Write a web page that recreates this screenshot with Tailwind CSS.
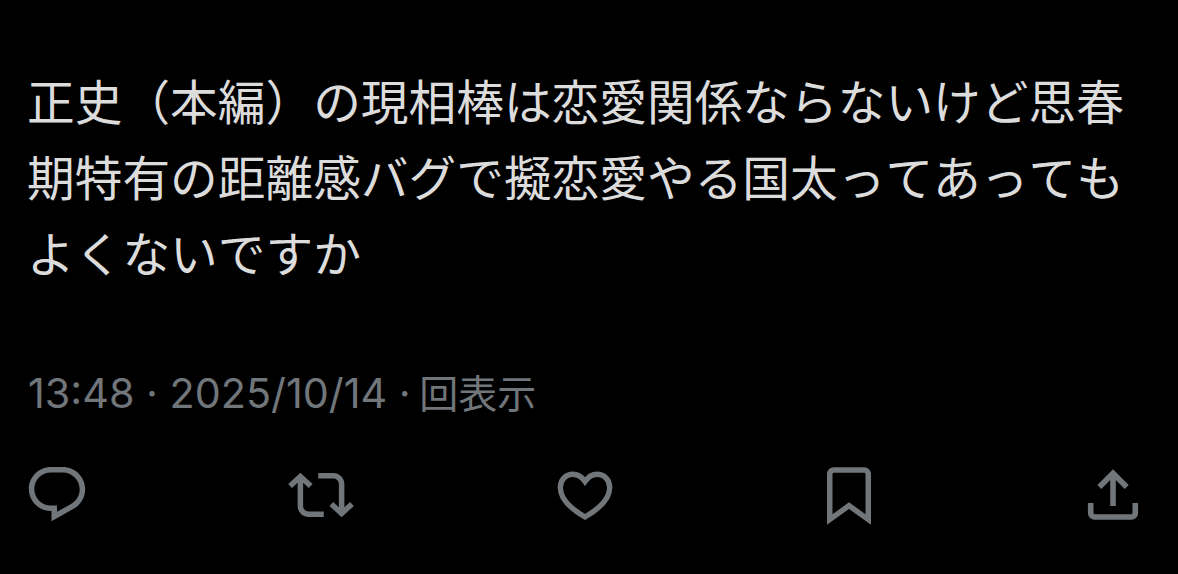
<!DOCTYPE html>
<html lang="ja">
<head>
  <meta charset="UTF-8" />
  <meta name="viewport" content="width=device-width, initial-scale=1.0" />
  <title>Post</title>
  <script src="https://cdn.jsdelivr.net/npm/@tailwindcss/browser@4"></script>
</head>
<body class="bg-black h-screen overflow-hidden">

  <article class="flex flex-col pt-[62px]">
    <p class="pl-[27px] font-['Noto_Sans_CJK_JP',sans-serif] [font-kerning:none] text-[47.7px] leading-[76px] text-[#dcdcdc] whitespace-nowrap">
      正史（本編）の現相棒は恋愛関係ならないけど思春<br />
      期特有の距離感バグで擬恋愛やる国太ってあっても<br />
      よくないですか
    </p>

    <div class="mt-[79px] pl-7 h-12 font-['Inter','Noto_Sans_CJK_JP',sans-serif] text-[41.3px] leading-[48px] text-[#71767b] whitespace-nowrap">13:48 · 2025/10/14 · <span class="-ml-[3px] text-[39px]">回表示</span></div>

    <!-- Actions -->
    <div class="mt-[45px] pl-6 pr-8 flex items-center justify-between text-[#71767b]">
      <button aria-label="返信">
        <svg class="size-[66px]" viewBox="0 0.2 24 24" fill="currentColor">
          <path d="M1.751 10c0-4.42 3.584-8 8.005-8h4.366c4.49 0 8.129 3.64 8.129 8.13 0 2.96-1.607 5.68-4.196 7.11l-8.054 4.46v-3.69h-.067c-4.49.1-8.183-3.51-8.183-8.01zm8.005-6c-3.317 0-6.005 2.69-6.005 6 0 3.37 2.77 6.08 6.138 6.01l.351-.01h1.761v2.3l5.087-2.81c1.951-1.08 3.163-3.13 3.163-5.36 0-3.39-2.744-6.13-6.129-6.13H9.756z" />
        </svg>
      </button>
      <button aria-label="リポスト">
        <svg class="size-[66px]" viewBox="0 0 24 24" fill="currentColor">
          <path d="M4.5 3.88l4.432 4.14-1.364 1.46L5.5 7.55V16c0 1.1.896 2 2 2H13v2H7.5c-2.209 0-4-1.79-4-4V7.55L1.432 9.48.068 8.02 4.5 3.88zM16.5 6H11V4h5.5c2.209 0 4 1.79 4 4v8.45l2.068-1.93 1.364 1.46-4.432 4.14-4.432-4.14 1.364-1.46 2.068 1.93V8c0-1.1-.896-2-2-2z" />
        </svg>
      </button>
      <button aria-label="いいね">
        <svg class="size-[66px]" viewBox="0 0 66 66" fill="none" stroke="currentColor" stroke-width="5.4">
          <path d="M33 19.5C29.5 14.5 25.5 12.3 21 12.3C13.5 12.3 8.3 18 8.3 25.5C8.3 36 17.5 46 33 55C48.5 46 57.7 36 57.7 25.5C57.7 18 52.5 12.3 45 12.3C40.5 12.3 36.5 14.5 33 19.5Z" />
        </svg>
      </button>
      <button aria-label="ブックマーク">
        <svg class="size-[66px]" viewBox="0 0.1 24 24" fill="currentColor">
          <path d="M4 4.5C4 3.12 5.119 2 6.5 2h11C18.881 2 20 3.12 20 4.5v18.44l-8-5.71-8 5.71V4.5zM6.5 4c-.276 0-.5.22-.5.5v14.56l6-4.29 6 4.29V4.5c0-.28-.224-.5-.5-.5h-11z" />
        </svg>
      </button>
      <button aria-label="共有">
        <svg class="size-[66px]" viewBox="0 0 66 66" fill="none" stroke="currentColor" stroke-width="5.6">
          <path d="M33 12V44M19.3 24.9L33 11.2L46.7 24.9" />
          <path d="M10.7 41V51C10.7 53.2 12.5 55 14.7 55H51.3C53.5 55 55.3 53.2 55.3 51V41" />
        </svg>
      </button>
    </div>
  </article>

</body>
</html>
